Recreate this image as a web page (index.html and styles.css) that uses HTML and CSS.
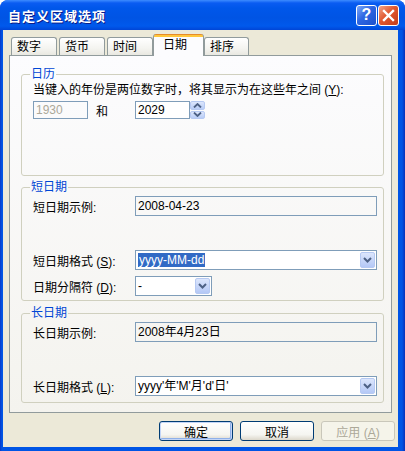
FILE: index.html
```html
<!DOCTYPE html>
<html lang="zh-CN">
<head>
    <meta charset="UTF-8">
    <meta name="viewport" content="width=device-width, initial-scale=1.0">
    <title>自定义区域选项</title>
    <link rel="stylesheet" href="styles.css">
</head>
<body>
    <div class="window">
        <div class="titlebar">
            <span class="title">自定义区域选项</span>
            <div class="caption-buttons">
                <div class="caption-btn help">?</div>
                <div class="caption-btn close">
                    <svg width="21" height="21" viewBox="0 0 21 21">
                        <path d="M6 6 L15 15 M15 6 L6 15" stroke="#fff" stroke-width="2.4" stroke-linecap="square"/>
                    </svg>
                </div>
            </div>
        </div>

        <div class="client">
            <div class="tabs">
                <div class="tab">数字</div>
                <div class="tab">货币</div>
                <div class="tab before-active">时间</div>
                <div class="tab active">日期</div>
                <div class="tab after-active">排序</div>
            </div>

            <div class="tab-panel">
                <fieldset class="group calendar">
                    <legend>日历</legend>
                    <div class="hint">当键入的年份是两位数字时，将其显示为在这些年之间 (<u>Y</u>):</div>
                    <div class="row year-row">
                        <div class="year-from">
                            <div class="field year disabled">1930</div>
                            <span class="and">和</span>
                        </div>
                        <div class="year-to">
                            <div class="field year">2029</div>
                            <div class="spinner">
                                <div class="spin-btn">
                                    <svg width="9" height="5" viewBox="0 0 9 5"><path d="M1 4.5 L4.5 1 L8 4.5" fill="none" stroke="#4D6185" stroke-width="1.8"/></svg>
                                </div>
                                <div class="spin-btn">
                                    <svg width="9" height="5" viewBox="0 0 9 5"><path d="M1 0.5 L4.5 4 L8 0.5" fill="none" stroke="#4D6185" stroke-width="1.8"/></svg>
                                </div>
                            </div>
                        </div>
                    </div>
                </fieldset>

                <fieldset class="group short-date">
                    <legend>短日期</legend>
                    <div class="row first">
                        <span class="label">短日期示例:</span>
                        <div class="field sample">2008-04-23</div>
                    </div>
                    <div class="row spaced">
                        <span class="label">短日期格式 (<u>S</u>):</span>
                        <div class="combo">
                            <span class="value"><span class="selected">yyyy-MM-dd</span></span>
                            <span class="drop">
                                <svg width="9" height="6" viewBox="0 0 9 6"><path d="M1 1 L4.5 4.5 L8 1" fill="none" stroke="#4D6185" stroke-width="2"/></svg>
                            </span>
                        </div>
                    </div>
                    <div class="row tight">
                        <span class="label">日期分隔符 (<u>D</u>):</span>
                        <div class="combo short">
                            <span class="value">-</span>
                            <span class="drop">
                                <svg width="9" height="6" viewBox="0 0 9 6"><path d="M1 1 L4.5 4.5 L8 1" fill="none" stroke="#4D6185" stroke-width="2"/></svg>
                            </span>
                        </div>
                    </div>
                </fieldset>

                <fieldset class="group long-date">
                    <legend>长日期</legend>
                    <div class="row first">
                        <span class="label">长日期示例:</span>
                        <div class="field sample">2008年4月23日</div>
                    </div>
                    <div class="row spaced">
                        <span class="label">长日期格式 (<u>L</u>):</span>
                        <div class="combo">
                            <span class="value">yyyy'年'M'月'd'日'</span>
                            <span class="drop">
                                <svg width="9" height="6" viewBox="0 0 9 6"><path d="M1 1 L4.5 4.5 L8 1" fill="none" stroke="#4D6185" stroke-width="2"/></svg>
                            </span>
                        </div>
                    </div>
                </fieldset>
            </div>

            <div class="dialog-buttons">
                <button class="btn default">确定</button>
                <button class="btn">取消</button>
                <button class="btn" disabled>应用 (<u>A</u>)</button>
            </div>
        </div>
    </div>
</body>
</html>
```

FILE: styles.css
```css
* {
    margin: 0;
    padding: 0;
    box-sizing: border-box;
}

body {
    font-family: "Liberation Sans", "Noto Sans CJK SC", sans-serif;
    font-size: 12px;
    color: #000;
    background: #fff;
}

.window {
    width: 405px;
    height: 451px;
    display: flex;
    flex-direction: column;
    background: linear-gradient(to right, #0838C8, #0055E5 2px, #0055E5 calc(100% - 3px), #0831B8);
    border-radius: 8px 8px 0 0;
    overflow: hidden;
}

.titlebar {
    height: 30px;
    flex: none;
    display: flex;
    align-items: center;
    justify-content: space-between;
    padding: 0 6px 0 8px;
    background: linear-gradient(to bottom, #3D8CFF 0px, #0A5CF2 3px, #0057EA 8px, #0054E4 18px, #0059EC 26px, #0045D6 30px);
}

.title {
    color: #fff;
    font-weight: bold;
    font-size: 13px;
    letter-spacing: 1px;
    text-shadow: 1px 1px 0 #0B1B88;
}

.caption-buttons {
    display: flex;
    gap: 1px;
}

.caption-btn {
    width: 21px;
    height: 21px;
    border: 1px solid #fff;
    border-radius: 3px;
    display: flex;
    align-items: center;
    justify-content: center;
}

.caption-btn.help {
    background: linear-gradient(135deg, #7EA8F8, #2D66E2 45%, #1C50CC);
    color: #fff;
    font-weight: bold;
    font-size: 16px;
}

.caption-btn.close {
    background: linear-gradient(135deg, #F2A58A, #E0572F 45%, #C23C18);
}

.caption-btn.close svg {
    margin: -1px;
}

.client {
    flex: 1;
    margin: 0 7px 4px 3px;
    padding: 4px 6px 0;
    background: #ECE9D8;
    display: flex;
    flex-direction: column;
}

.tabs {
    display: flex;
    align-items: flex-end;
    height: 21px;
    padding-left: 2px;
}

.tab {
    width: 46px;
    height: 18px;
    margin-right: 2px;
    padding-left: 5px;
    line-height: 18px;
    border: 1px solid #919B9C;
    border-bottom: none;
    border-radius: 3px 3px 0 0;
    background: linear-gradient(#FFFFFF, #F4F4F0 60%, #E9E8E1);
}

.tab.before-active {
    margin-right: 0;
}

.tab.active {
    width: 51px;
    height: 22px;
    margin: 0 0 -1px;
    padding-left: 9px;
    line-height: 22px;
    position: relative;
    z-index: 1;
    border-top: none;
    border-radius: 3px 3px 0 0;
    background: linear-gradient(#E68B2C 0, #E68B2C 1px, #FFC73C 1px, #FFC73C 3px, #FCFCFE 3px);
}

.tab.after-active {
    width: 45px;
}

.tab-panel {
    height: 358px;
    border: 1px solid #919B9C;
    background: linear-gradient(to bottom, #FCFCFE, #F4F3EE);
    padding: 11px 7px 0 11px;
}

.group {
    border: 1px solid #D0D0BF;
    border-radius: 3px;
    padding: 0 6px 0 11px;
}

.group legend {
    color: #0046D5;
    margin-left: -3px;
    padding: 0 1px;
    line-height: 14px;
}

.group.calendar {
    height: 109px;
}

.group.short-date {
    height: 121px;
    margin-top: 4px;
}

.group.long-date {
    height: 97px;
    margin-top: 5px;
}

.hint {
    margin-top: 2px;
    line-height: 14px;
}

.row {
    display: grid;
    grid-template-columns: 102px 1fr;
    align-items: center;
}

.row.first {
    margin-top: 2px;
}

.row.spaced {
    margin-top: 34px;
}

.row.tight {
    margin-top: 6px;
}

.year-row {
    margin-top: 4px;
}

.year-from,
.year-to {
    display: flex;
    align-items: center;
}

.and {
    margin-left: 8px;
}

.field {
    height: 20px;
    border: 1px solid #7F9DB9;
    padding: 0 2px;
    line-height: 18px;
    background: #fff;
    white-space: nowrap;
}

.field.year {
    width: 55px;
    height: 18px;
    line-height: 16px;
}

.field.disabled {
    background: transparent;
    color: #ACA899;
}

.field.sample {
    background: transparent;
}

.spinner {
    width: 15px;
    height: 18px;
    display: flex;
    flex-direction: column;
    gap: 1px;
}

.spin-btn {
    flex: 1;
    display: flex;
    align-items: center;
    justify-content: center;
    border-radius: 2px;
    background: linear-gradient(#DCE6FC, #B8CCF6);
    border: 1px solid #B6C9F2;
}

.combo {
    height: 20px;
    border: 1px solid #7F9DB9;
    background: #fff;
    display: flex;
    align-items: center;
    padding-left: 2px;
}

.combo.short {
    width: 77px;
}

.combo .value {
    flex: 1;
    white-space: nowrap;
    line-height: 14px;
}

.combo .selected {
    background: #316AC5;
    color: #fff;
    padding: 0 1px;
}

.combo .drop {
    width: 15px;
    height: 16px;
    margin-right: 1px;
    border: 1px solid #B6C9F2;
    border-radius: 2px;
    background: linear-gradient(#DCE6FC, #B4C8F6);
    display: flex;
    align-items: center;
    justify-content: center;
}

.dialog-buttons {
    display: flex;
    justify-content: flex-end;
    gap: 7px;
    margin: 8px -3px 0 0;
}

.btn {
    width: 74px;
    height: 20px;
    font: inherit;
    border: 1px solid #003C74;
    border-radius: 3px;
    background: linear-gradient(#FFFFFF, #F5F5F1 70%, #DCD7CB);
    color: #000;
}

.btn.default {
    box-shadow: inset 0 0 0 1px #C3D5F7, inset -1px -1px 0 1px #8FB0E8;
}

.btn:disabled {
    border-color: #C9C7BA;
    background: #F5F4EA;
    color: #ACA899;
}
```
